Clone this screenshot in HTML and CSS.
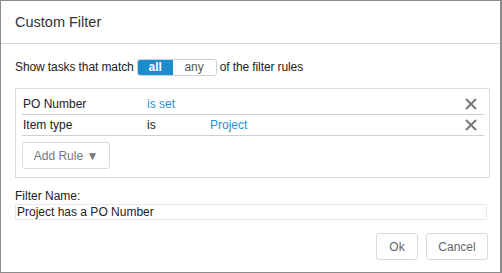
FILE: index.html
```html
<!DOCTYPE html>
<html lang="en">

<head>
    <meta charset="UTF-8">
    <meta name="viewport" content="width=device-width, initial-scale=1.0">
    <title>Custom Filter</title>
    <link rel="stylesheet" href="styles.css">
</head>

<body>
    <div class="dialog">
        <div class="dialog-header">Custom Filter</div>

        <div class="dialog-body">
            <div class="match-row">
                <span>Show tasks that match</span>
                <span class="toggle">
                    <span class="toggle-item active">all</span>
                    <span class="toggle-item">any</span>
                </span>
                <span>of the filter rules</span>
            </div>

            <div class="rules">
                <div class="rule">
                    <span class="rule-field">PO Number</span>
                    <span class="rule-op link">is set</span>
                    <span class="rule-value"></span>
                    <svg class="rule-remove" width="12" height="12" viewBox="0 0 12 12">
                        <path d="M1 1L11 11M11 1L1 11" stroke="#777" stroke-width="2" />
                    </svg>
                </div>
                <div class="rule">
                    <span class="rule-field">Item type</span>
                    <span class="rule-op">is</span>
                    <span class="rule-value link">Project</span>
                    <svg class="rule-remove" width="12" height="12" viewBox="0 0 12 12">
                        <path d="M1 1L11 11M11 1L1 11" stroke="#777" stroke-width="2" />
                    </svg>
                </div>
                <button class="btn add-rule">Add Rule &#9660;</button>
            </div>

            <div class="name-label">Filter Name:</div>
            <input class="name-input" type="text" value="Project has a PO Number">
        </div>

        <div class="dialog-footer">
            <button class="btn">Ok</button>
            <button class="btn">Cancel</button>
        </div>
    </div>
</body>

</html>
```

FILE: styles.css
```css
* {
    font-family: "Liberation Sans", Arial, sans-serif;
    box-sizing: border-box;
}

body {
    margin: 0;
    background-color: white;
}

.dialog {
    width: 502px;
    height: 273px;
    border: 1px solid #8c8c8c;
    border-right-width: 2px;
    background-color: white;
    color: #222;
    font-size: 12px;
}

.dialog-header {
    height: 43px;
    border-bottom: 1px solid #d9d9d9;
    padding: 0 14px;
    font-size: 14.5px;
    line-height: 43px;
    color: #333;
}

.dialog-body {
    padding: 14px 10px 0 14px;
}

.match-row {
    display: flex;
    align-items: center;
    gap: 3px;
    height: 18px;
    letter-spacing: -0.1px;
}

.toggle {
    display: flex;
    height: 17px;
    border: 1px solid #d0d0d0;
    border-radius: 3px;
    overflow: hidden;
    letter-spacing: 0;
}

.toggle-item {
    width: 43px;
    line-height: 15px;
    text-align: center;
    color: #555;
}

.toggle-item.active {
    width: 35px;
    background-color: #1b8ccc;
    color: white;
    font-weight: bold;
}

.rules {
    margin-top: 12px;
    height: 90px;
    border: 1px solid #dcdcdc;
    padding: 5px 5px 0 6px;
}

.rule {
    display: flex;
    align-items: center;
    height: 21px;
    border-bottom: 1px solid #cfcfcf;
    padding-left: 1px;
}

.rule-field {
    width: 124px;
}

.rule-op {
    width: 63px;
}

.rule-value {
    flex: 1;
}

.link {
    color: #2a8fcf;
}

.rule-remove {
    margin-right: 7px;
}

.btn {
    height: 27px;
    background-color: white;
    border: 1px solid #dadada;
    border-radius: 3px;
    color: #666;
    font-size: 12px;
    padding: 0 10px;
}

.add-rule {
    margin-top: 6px;
    width: 88px;
    color: #777;
}

.name-label {
    margin-top: 11px;
    line-height: 14px;
}

.name-input {
    display: block;
    width: 472px;
    height: 16px;
    margin: 1px 0 0;
    border: 1px solid #e8e8e8;
    padding: 0 1px;
    font-size: 12px;
    color: #222;
    outline: none;
}

.dialog-footer {
    display: flex;
    justify-content: flex-end;
    gap: 8px;
    padding: 13px 12px 0 0;
}

.dialog-footer .btn:first-child {
    width: 42px;
    padding: 0;
}

.dialog-footer .btn:last-child {
    width: 62px;
    padding: 0;
}
```
